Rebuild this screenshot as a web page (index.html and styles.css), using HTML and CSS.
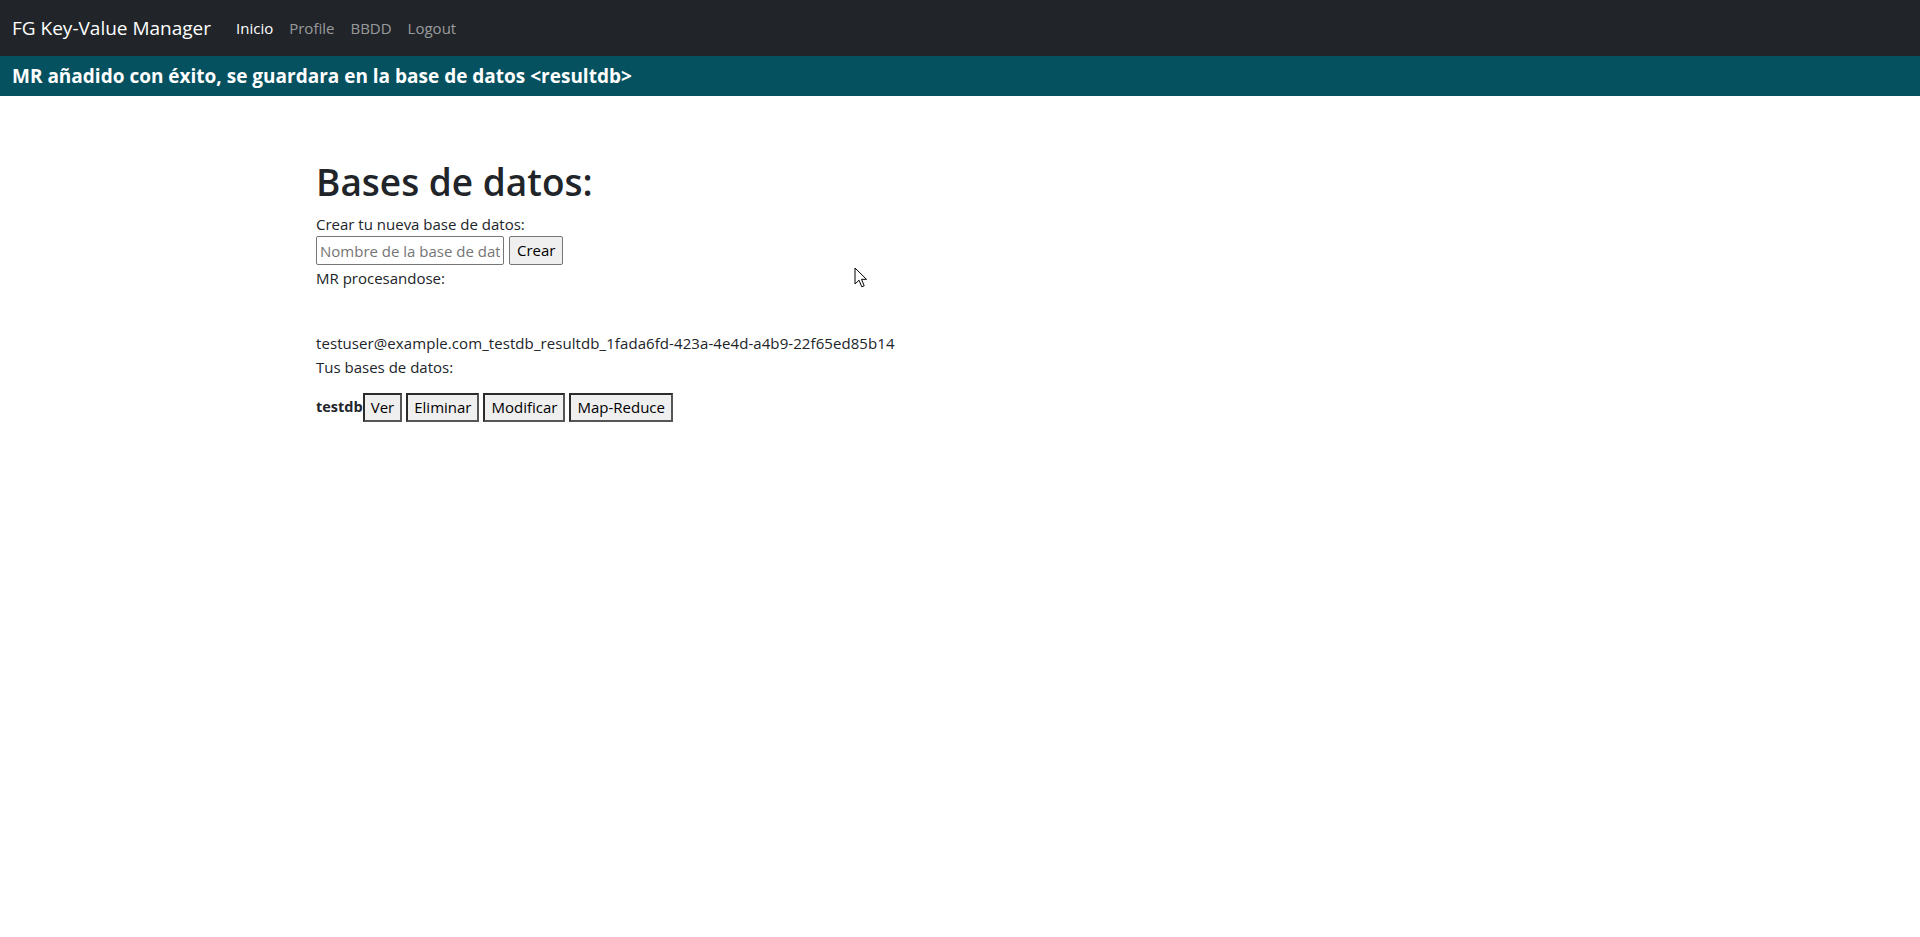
FILE: index.html
```html
<!DOCTYPE html>
<html lang="es">
<head>
<meta charset="utf-8">
<title>FG Key-Value Manager</title>
<link rel="stylesheet" href="styles.css">
</head>
<body>
<nav class="navbar">
  <a class="brand" href="#">FG Key-Value Manager</a>
  <ul class="nav">
    <li><a class="nav-link active" href="#">Inicio</a></li>
    <li><a class="nav-link" href="#">Profile</a></li>
    <li><a class="nav-link" href="#">BBDD</a></li>
    <li><a class="nav-link" href="#">Logout</a></li>
  </ul>
</nav>
<div class="banner">MR añadido con éxito, se guardara en la base de datos &lt;resultdb&gt;</div>
<main class="container">
  <h1 class="title">Bases de datos:</h1>
  <div class="line">Crear tu nueva base de datos:</div>
  <form class="create-form">
    <input class="db-input" type="text" placeholder="Nombre de la base de datos"><button class="btn-create" type="button">Crear</button>
  </form>
  <div class="line">MR procesandose:</div>
  <div class="mr-list">
    <div class="line mr-item">testuser@example.com_testdb_resultdb_1fada6fd-423a-4e4d-a4b9-22f65ed85b14</div>
  </div>
  <div class="line">Tus bases de datos:</div>
  <ul class="db-list">
    <li class="db-item"><strong class="db-name">testdb</strong><button class="btn-action" type="button">Ver</button><button class="btn-action" type="button">Eliminar</button><button class="btn-action" type="button">Modificar</button><button class="btn-action" type="button">Map-Reduce</button></li>
  </ul>
</main>
<svg class="cursor" width="14" height="22" viewBox="0 0 14 22" aria-hidden="true">
  <path d="M1 1 L1 17 L5 13.2 L7.8 19.8 L10.2 18.8 L7.5 12.3 L12.5 12.3 Z" fill="#fff" stroke="#000" stroke-width="1" stroke-linejoin="round"/>
</svg>
</body>
</html>
```
FILE: styles.css
```css
* { box-sizing: border-box; }
html, body { margin: 0; padding: 0; }
body {
  font-family: "Open Sans", "Noto Sans", sans-serif;
  font-size: 15px;
  line-height: 21px;
  color: #212529;
  background: #fff;
}
.navbar {
  height: 56px;
  background: #212529;
  display: flex;
  align-items: center;
  padding: 0 12px;
}
.brand {
  font-size: 19px;
  line-height: 28px;
  color: #fff;
  text-decoration: none;
  margin-right: 17px;
}
.nav {
  list-style: none;
  margin: 0;
  padding: 0;
  display: flex;
}
.nav-link {
  display: block;
  padding: 8px;
  font-size: 15px;
  line-height: 24px;
  color: rgba(255,255,255,0.55);
  text-decoration: none;
}
.nav-link.active { color: #fff; }
.banner {
  height: 40px;
  background: #055160;
  color: #fff;
  font-weight: 700;
  font-size: 19px;
  padding: 0 12px;
  display: flex;
  align-items: center;
}
.container {
  padding: 0 316px;
}
.title {
  font-size: 37px;
  font-weight: 600;
  line-height: 1.2;
  margin: 64px 0 10px;
}
.create-form {
  display: flex;
  gap: 5px;
  margin: 1px 0 3px;
}
.db-input {
  width: 188px;
  height: 29px;
  font: inherit;
  color: #212529;
  border: 1px solid #767676;
  border-radius: 2px;
  padding: 1px 3px;
  background: #fff;
}
.db-input::placeholder { color: #757575; }
.btn-create {
  height: 29px;
  font: inherit;
  background: #efefef;
  border: 1px solid #767676;
  border-radius: 2px;
  padding: 0 7px;
  color: #000;
}
.mr-list { margin: 44px 0 3px; }
.mr-item { letter-spacing: 0.08px; }
.db-list { list-style: none; padding: 0; margin: 15px 0 0; }
.db-item { display: flex; align-items: flex-start; gap: 4px; }
.db-name { font-weight: 700; font-size: 14.5px; margin: 3px -4px 0 0; }
.btn-action {
  font: inherit;
  height: 29px;
  margin: 0;
  background: #efefef;
  border: 2px solid #2b2b2b;
  border-right-color: #555;
  border-bottom-color: #555;
  padding: 0 6px;
  color: #000;
}
.cursor { position: absolute; left: 854px; top: 267px; }
```
